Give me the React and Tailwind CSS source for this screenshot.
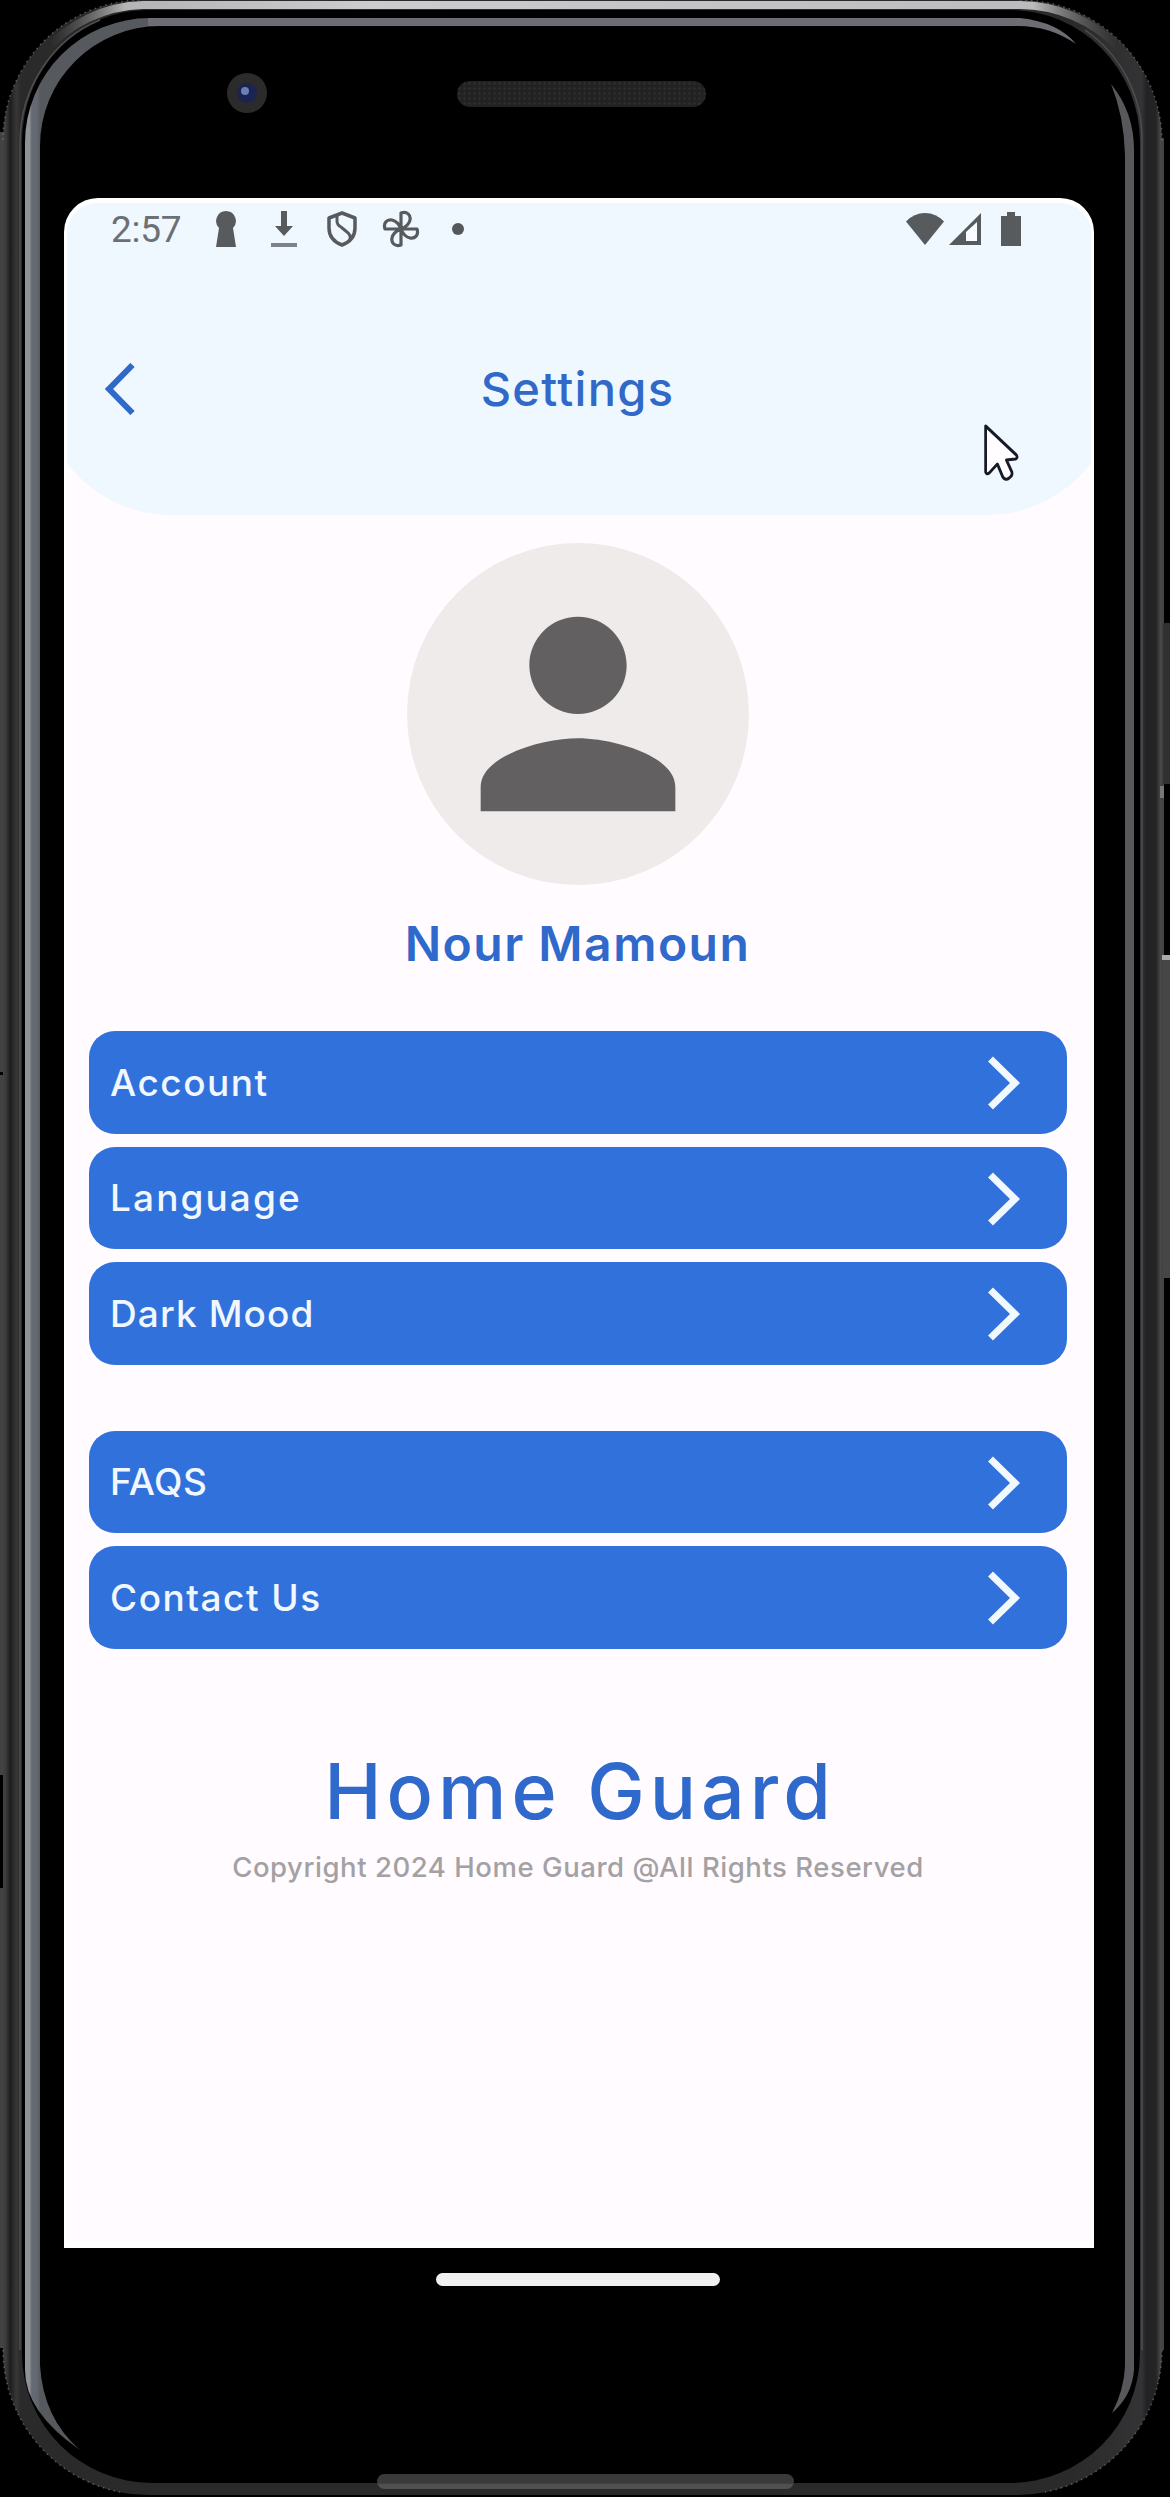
import React from "react";

const primary = ["Account", "Language", "Dark Mood"];
const secondary = ["FAQS", "Contact Us"];

const spacing = {
  Account: "tracking-[1.500px]",
  Language: "tracking-[2.100px]",
  "Dark Mood": "tracking-[1.100px]",
  FAQS: "tracking-[0.400px]",
  "Contact Us": "tracking-[1.500px]",
};

function DeviceFrame() {
  return (
    <svg className="absolute inset-0 h-full w-full" viewBox="0 0 1170 2497" fill="none">
      <defs>
        <linearGradient id="rim" x1="0" y1="0" x2="1164" y2="0" gradientUnits="userSpaceOnUse">
          <stop offset="0" stopColor="#4a4848" />
          <stop offset="0.005" stopColor="#3c3a3a" />
          <stop offset="0.009" stopColor="#1e1e1e" />
          <stop offset="0.014" stopColor="#373737" />
          <stop offset="0.018" stopColor="#2a2a2a" />
          <stop offset="0.08" stopColor="#2a2a2a" />
          <stop offset="0.92" stopColor="#2a2a2a" />
          <stop offset="0.981" stopColor="#333335" />
          <stop offset="0.985" stopColor="#222224" />
          <stop offset="0.993" stopColor="#242424" />
          <stop offset="0.997" stopColor="#4a4747" />
          <stop offset="1" stopColor="#3a3838" />
        </linearGradient>
        <linearGradient id="shine" x1="50" y1="0" x2="1118" y2="0" gradientUnits="userSpaceOnUse">
          <stop offset="0" stopColor="#777" stopOpacity="0" />
          <stop offset="0.07" stopColor="#b4b4b6" />
          <stop offset="0.3" stopColor="#cccccf" />
          <stop offset="0.92" stopColor="#bcbcbe" />
          <stop offset="1" stopColor="#777" stopOpacity="0" />
        </linearGradient>
        <linearGradient id="inner" x1="25" y1="0" x2="40" y2="0" gradientUnits="userSpaceOnUse">
          <stop offset="0" stopColor="#909296" />
          <stop offset="0.3" stopColor="#8e9195" />
          <stop offset="0.45" stopColor="#666b73" />
          <stop offset="0.85" stopColor="#62676f" />
          <stop offset="1" stopColor="#56595d" />
        </linearGradient>
      </defs>
      <path d="M0 132H5V2348H0zM1158 138H1164V2350H1158z" fill="#444242" />
      <path d="M143 0H1020A142 142 0 0 1 1162 142V2350A145 145 0 0 1 1017 2495H148A145 145 0 0 1 3 2350V140A140 140 0 0 1 143 0Z" fill="url(#rim)" />
      <path d="M3 140A140 140 0 0 1 143 0M1020 0A142 142 0 0 1 1162 142M3 2350A145 145 0 0 0 120 2492M1162 2350A145 145 0 0 1 1045 2492" stroke="#858585" strokeWidth="1.500" strokeDasharray="1.500 4" opacity=".6" />
      <path d="M44 52A135 135 0 0 1 143 5H1020A137 137 0 0 1 1118 47" stroke="url(#shine)" strokeWidth="8" />
      <path d="M147 10H1010A130 132 0 0 1 1140 142V2353A130 130 0 0 1 1010 2483H152A130 130 0 0 1 22 2353V142A125 132 0 0 1 147 10Z" fill="#000" />
      <path d="M20 2350V142A125 132 0 0 1 100 20M1142 2350V142A130 132 0 0 0 1085 30" stroke="#4e4e50" strokeWidth="1.500" />
      <path d="M25 2370V143A125 125 0 0 1 150 18H160V26A120 120 0 0 0 40 146V2365Q43 2418 80 2450Q25 2412 25 2370Z" fill="url(#inner)" />
      <path d="M148 18H1020Q1058 22 1076 44Q1050 26 1018 26H148Z" fill="#6d6d73" />
      <path d="M1111 84Q1134 112 1134 150V2370Q1132 2396 1112 2413Q1124 2390 1125 2366V155Q1124 116 1111 84Z" fill="#57575c" />
      <path d="M0 1072h3v3H0zM0 1775h3v113H0z" fill="#000" />
      <path d="M1163 623h7v161h-7z" fill="#30302f" />
      <path d="M1160 786h4v12h-4z" fill="#777" />
      <path d="M1163 957h7v321h-7z" fill="#464646" />
      <path d="M1162 955h8v5h-8z" fill="#aaa" />
    </svg>
  );
}

function StatusBar() {
  return (
    <div className="flex h-[62px] items-center pl-[47px] pr-[72px] text-[#585b5e]">
      <span className="w-[70px] font-[Roboto] text-[37px] leading-none tracking-[-0.300px] text-[#6c7074]">2:57</span>
      <svg className="ml-[34px] h-[38px] w-[22px]" viewBox="0 0 22 38" fill="currentColor">
        <path d="M11 1a10 10 0 0 1 7 17l3 19H1l3-19A10 10 0 0 1 11 1z" />
      </svg>
      <svg className="ml-[33px] h-[38px] w-[28px]" viewBox="0 0 28 38" fill="currentColor">
        <path d="M11 1h6v15h6l-9 10-9-10h6z" />
        <path d="M1 33h26v4H1z" opacity=".75" />
      </svg>
      <svg className="ml-[28px] h-[38px] w-[32px]" viewBox="0 0 32 38" fill="none" stroke="currentColor" strokeWidth="3.500">
        <path d="M16 3 29 8v10c0 8-5 14-13 17C8 32 3 26 3 18V8z" strokeLinejoin="round" />
        <path d="M11 6v5q0 4 4 6l6 5q4 3 3 7" strokeWidth="3" />
      </svg>
      <svg className="ml-[24px] h-[38px] w-[38px]" viewBox="0 0 38 38" fill="none" stroke="currentColor" strokeWidth="3.200">
        <path d="M19 19V3c6-2 10 2 9 7s-4 7-9 9zM19 19h16c2 6-2 10-7 9s-7-4-9-9zM19 19v16c-6 2-10-2-9-7s4-7 9-9zM19 19H3c-2-6 2-10 7-9s7 4 9 9z" strokeLinejoin="round" />
      </svg>
      <span className="ml-[32px] size-3 rounded-full bg-[#55595c]" />
      <div className="ml-auto flex items-center">
        <svg className="h-[34px] w-[40px]" viewBox="0 0 40 34" fill="currentColor">
          <path d="M20 33 1 9.500Q9 1 20 1t19 8.500z" />
        </svg>
        <svg className="ml-[3px] h-[34px] w-[34px]" viewBox="0 0 34 34">
          <path d="M33 1v32H1z" fill="currentColor" />
          <path d="M29 10v19H18V20z" fill="#f8fbff" />
        </svg>
        <svg className="ml-[18px] h-[36px] w-[22px]" viewBox="0 0 22 36" fill="currentColor">
          <path d="M7 1h8v4h6v30H1V5h6z" />
        </svg>
      </div>
    </div>
  );
}

function Row({ label }) {
  return (
    <button className="flex h-[102.500px] w-full items-center justify-between rounded-[26px] bg-[#3171db] pl-[21px] pr-[46px] text-left">
      <span className={"text-[37px] font-medium leading-none text-[#f0f7ff] " + spacing[label]}>{label}</span>
      <svg className="mt-[2px] h-[54px] w-[34px]" viewBox="0 0 34 54" fill="none" stroke="#f2f8ff" strokeWidth="7">
        <path d="M3.500 3 28 27 3.500 51" />
      </svg>
    </button>
  );
}

export default function App() {
  return (
    <div className="relative flex h-[2497px] w-[1170px] flex-col overflow-hidden bg-black font-['Inter','Liberation_Sans',sans-serif]">
      <DeviceFrame />
      <div className="relative flex h-[198px] shrink-0 items-start">
        <div className="ml-[227px] mt-[73px] flex size-10 items-center justify-center rounded-full bg-[#2b2b2c]">
          <div className="flex size-5 items-center justify-center rounded-full bg-[#1b2350]">
            <div className="mb-1 mr-1 size-2 rounded-full bg-[#6b7fb4]" />
          </div>
        </div>
        <div className="ml-[190px] mt-[81px] h-[26px] w-[249px] rounded-full bg-[#222] bg-[radial-gradient(#2d2d2d_1px,transparent_1.500px)] bg-size-[5px_5px]" />
      </div>

      <main className="relative ml-[64px] flex h-[2050px] w-[1030px] shrink-0 flex-col overflow-hidden rounded-t-[34px] border-x-[3px] border-b-[6px] border-t-[5px] border-white bg-[#fffbff]">
        <header className="-mx-[26px] h-[312px] shrink-0 rounded-b-[130px] bg-[#eff7ff] px-[23px]">
          <div className="-mt-[5px]">
            <StatusBar />
          </div>
          <div className="mt-[89px] flex h-[80px] items-center justify-between pl-[40px] pr-[43px]">
            <svg className="h-[52px] w-[31px]" viewBox="0 0 31 52" fill="none" stroke="#3069c8" strokeWidth="6">
              <path d="M28.500 2 5 26l23.500 24" />
            </svg>
            <h1 className="mb-[2px] text-[47px] font-[450] leading-none tracking-[1.300px] text-[#3069c8]">Settings</h1>
            <span className="w-[31px]" />
          </div>
        </header>

        <section className="mr-[3px] flex flex-col items-center">
          <div className="mt-[28px] flex size-[342px] items-center justify-center rounded-full bg-[#efebea]">
            <svg className="size-[292px]" viewBox="0 0 24 24" fill="#626061">
              <path d="M12 12c2.210 0 4-1.790 4-4s-1.790-4-4-4-4 1.790-4 4 1.790 4 4 4zm0 2c-2.670 0-8 1.340-8 4v2h16v-2c0-2.660-5.330-4-8-4z" />
            </svg>
          </div>
          <h2 className="mt-[35px] whitespace-nowrap text-[48px] font-semibold leading-none tracking-[1.500px] text-[#2f69cb]">Nour Mamoun</h2>
        </section>

        <nav className="mt-[63px] flex flex-col gap-[13px] pl-[22px] pr-[24px]">
          {primary.map((label) => <Row key={label} label={label} />)}
        </nav>
        <nav className="mt-[66px] flex flex-col gap-[13px] pl-[22px] pr-[24px]">
          {secondary.map((label) => <Row key={label} label={label} />)}
        </nav>

        <footer className="mr-[2px] flex flex-col items-center whitespace-nowrap">
          <p className="ml-[4px] mt-[104px] text-[77px] font-medium leading-none tracking-[5px] text-[#2f69cb]">Home Guard</p>
          <p className="mt-[24px] text-[27.500px] font-medium leading-none tracking-[0.550px] text-[#a3a1a3]">Copyright 2024 Home Guard @All Rights Reserved</p>
        </footer>

        <svg className="absolute left-[915px] top-[220px] h-[60px] w-[38px]" viewBox="0 0 42 60" preserveAspectRatio="none" fill="#fffdff" stroke="#151a26" strokeWidth="3" strokeLinejoin="round">
          <path d="M4 3v46q1 3 4 1l9-9 6 13q3 4 7 1 4-2 3-6l-6-12 10-1q3-1 1-4z" />
        </svg>
      </main>

      <div className="relative ml-[436px] mt-[25px] h-[13px] w-[284px] rounded-full bg-[#f0f0f0]" />
      <div className="relative ml-[377px] mt-[188px] h-[15px] w-[417px] rounded-full bg-linear-to-b from-[#3a3a3a] from-60% to-[#505050] to-70%" />
    </div>
  );
}
